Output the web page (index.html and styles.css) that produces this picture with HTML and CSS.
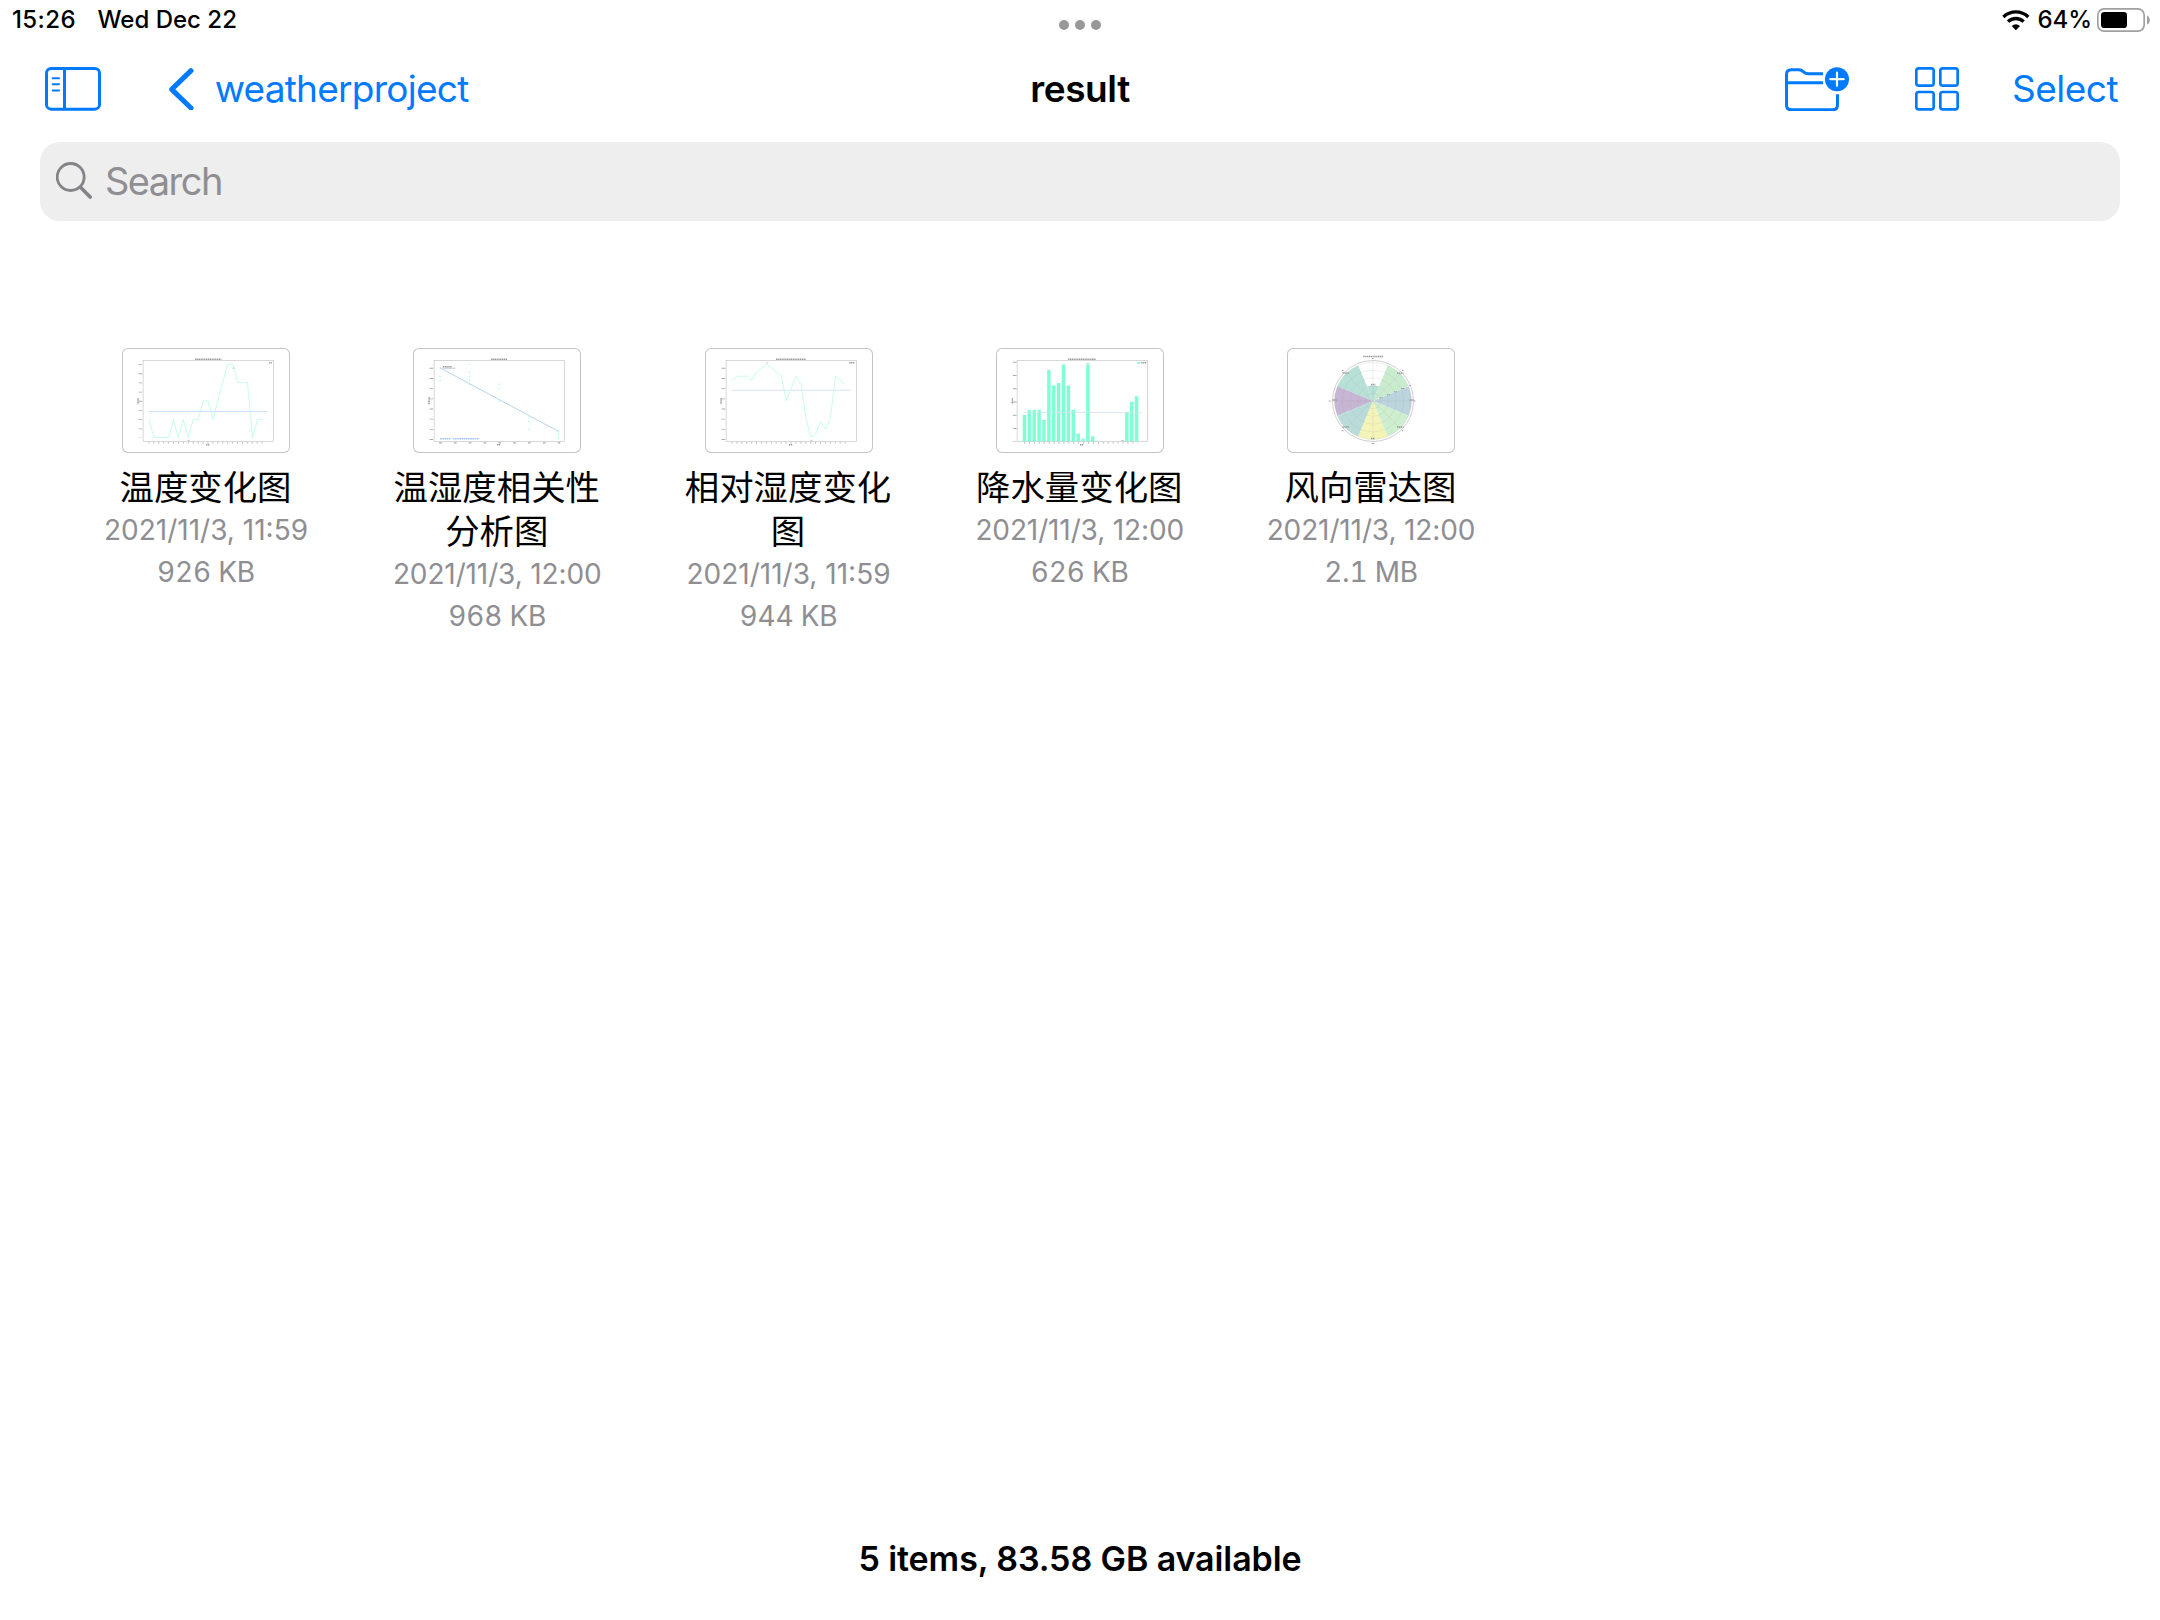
FILE: index.html
```html
<!DOCTYPE html>
<html lang="en">
<head>
<meta charset="utf-8">
<title>result</title>
<link rel="stylesheet" href="styles.css">
</head>
<body>
<div class="screen">
  <header class="status">
    <div class="status-left"><span class="time">15:26</span><span class="date">Wed Dec 22</span></div>
    <div class="dots"><i></i><i></i><i></i></div>
    <div class="status-right">
      <svg class="wifi" viewBox="786 29 83 61"><path d="M790 50A54 54 0 0 1 865 50M804 64A34 34 0 0 1 851 64" fill="none" stroke="#000" stroke-width="10"/><path d="M815 77Q827.500 67 840 77L827.500 90Z"/></svg>
      <span class="percent">64%</span>
      <svg class="battery" viewBox="1071 24 159 72"><rect x="1073.500" y="26.500" width="139" height="67" rx="19" fill="none" stroke="#a0a0a0" stroke-width="5"/><rect x="1083" y="36" width="78" height="48" rx="10"/><path d="M1221 46Q1230 51 1230 60T1221 74Z" fill="#a0a0a0"/></svg>
    </div>
  </header>
  <nav class="nav">
    <div class="nav-left">
      <svg class="icon-sidebar" viewBox="135 202 168 131"><g fill="none" stroke="#007aff"><rect x="139.500" y="206.500" width="159" height="122" rx="14" stroke-width="9"/><path d="M193.500 206V329" stroke-width="9"/><path d="M158 235.500H177M158 254H177M158 272.500H177" stroke-width="6" stroke-linecap="round"/></g></svg>
      <a class="back"><svg class="icon-back" viewBox="507 203 74 128"><path d="M573 211L515 267L573 323" fill="none" stroke="#007aff" stroke-width="15" stroke-linecap="round" stroke-linejoin="round"/></svg><span class="back-label">weatherproject</span></a>
    </div>
    <h1 class="title">result</h1>
    <div class="nav-right">
      <svg class="icon-folder" viewBox="135 197 192 133"><g fill="none" stroke="#007aff" stroke-width="9"><path d="M249 217.500H205C190 217.500 191 205.500 177 205.500H154Q139.500 205.500 139.500 220V311Q139.500 325.500 154 325.500H278Q292.500 325.500 292.500 311V279M140 244.500H249"/></g><circle cx="291" cy="233.500" r="36" fill="#007aff"/><path d="M271 233.500H311M291 213.500V253.500" stroke="#fff" stroke-width="6.500" stroke-linecap="round"/></svg>
      <svg class="icon-grid" viewBox="525 202 132 131"><g fill="none" stroke="#007aff" stroke-width="8"><rect x="529" y="206" width="52" height="52" rx="7"/><rect x="601" y="206" width="52" height="52" rx="7"/><rect x="529" y="277" width="52" height="52" rx="7"/><rect x="601" y="277" width="52" height="52" rx="7"/></g></svg>
      <a class="select">Select</a>
    </div>
  </nav>
  <div class="search">
    <svg class="icon-search" viewBox="168 486 108 111"><g fill="none" stroke="#848488"><circle cx="212" cy="531" r="40.500" stroke-width="8.500"/><path d="M243 563L270.500 591" stroke-width="11" stroke-linecap="round"/></g></svg>
    <span class="placeholder">Search</span>
  </div>
  <main class="files">
    <article class="file">
      <svg class="thumb" viewBox="97 40 502 313">
        <rect class="axes" x="160" y="77" width="390" height="242"/>
        <path class="label" d="M315 73H394M537 84H545M348 329H359M145 190V208"/>
        <path class="tick-y" d="M152 88V308"/><path class="tick-x" d="M176 323H519"/>
        <path class="mean" d="M178 229.500H531"/>
        <path class="series" d="M178 253L192 307L207 307L221 307L236 307L251 253L265 307L280 253L295 307L310 253L325 253L340 198L354 198L369 253L383 198L398 143L413 88L428 88L443 143L457 143L472 143L487 307L502 253L517 253"/>
        <path class="purple" d="M293 316H299M427 100H433"/>
      </svg>
      <h2 class="name">温度变化图</h2><p class="meta">2021/11/3, 11:59</p><p class="meta size">926 KB</p>
    </article>
    <article class="file">
      <svg class="thumb" viewBox="100 40 502 313">
        <rect class="axes" x="163" y="77" width="390" height="242"/>
        <path class="label" d="M333 73H382M189 96H215M351 329H362M148 187V208"/>
        <path class="purple" d="M189 100H227"/>
        <path class="tick-y wide" d="M155 99V316"/><path class="tick-x wide" d="M178 323H540"/>
        <path class="note" d="M181 311H212M219 311H298"/>
        <path class="fit" d="M181 99L535 289"/>
        <path class="points" d="M181 99h.1M181 124h.1M181 136h.1M269 88h.1M269 112h.1M269 124h.1M269 136h.1M269 148h.1M358 148h.1M358 161h.1M358 198h.1M446 246h.1M446 259h.1M446 283h.1M535 289h.1M535 296h.1M535 307h.1"/>
      </svg>
      <h2 class="name">温湿度相关性分析图</h2><p class="meta noon">2021/11/3, 12:00</p><p class="meta size">968 KB</p>
    </article>
    <article class="file">
      <svg class="thumb" viewBox="106 40 502 313">
        <rect class="axes" x="169" y="77" width="390" height="242"/>
        <path class="label" d="M318 73H408M537 84H554M357 329H368M154 190V208"/>
        <path class="tick-y wide" d="M161 99V316"/><path class="tick-x" d="M185 323H528"/>
        <path class="mean soft" d="M187 166H541"/>
        <path class="series" d="M187 136L201 124L216 124L231 124L245 136L260 112L275 100L291 88L305 100L319 112L334 124L349 198L363 161L378 124L393 148L407 246L422 307L437 296L451 259L466 283L481 246L496 124L511 136L526 149"/>
        <path class="purple" d="M289 84H295M421 316H427"/>
      </svg>
      <h2 class="name">相对湿度变化图</h2><p class="meta">2021/11/3, 11:59</p><p class="meta size">944 KB</p>
    </article>
    <article class="file">
      <svg class="thumb" viewBox="109 40 502 313">
        <rect class="axes" x="172" y="77" width="390" height="242"/>
        <path class="label" d="M324 73H408M543 84H558M360 329H371M158 190V208"/>
        <path class="tick-y bars-y" d="M165 81V320"/><path class="tick-x" d="M193 323H532"/>
        <path class="bars" d="M194 319V240M208.600 319V224M223.200 319V224M237.800 319V224M252.400 319V255M267 319V105M281.600 319V152M296 319V144M310.700 319V89M325.300 319V152M340 319V224M354.500 319V295M369 319V311M383.600 319V89M398.200 319V303M500 319V232M514.500 319V200M529 319V184"/>
        <path d="M531 84H540" stroke="#7fffd4" stroke-width="5"/>
        <path class="mean soft" d="M194 232H543"/><path class="purple" d="M380 86H387M483 316H491"/>
      </svg>
      <h2 class="name">降水量变化图</h2><p class="meta noon">2021/11/3, 12:00</p><p class="meta size">626 KB</p>
    </article>
    <article class="file">
      <svg class="thumb" viewBox="112 40 502 313">
        <g transform="translate(369 198)">
          <path fill="#bcd4dd" d="M0 0L106.200-44A115 115 0 0 1 106.200 44Z"/>
          <path fill="#c9eccf" d="M0 0L44-106.200A115 115 0 0 1 106.200-44Z"/>
          <path fill="#b7e1d6" d="M0 0L-17.600-42.500A46 46 0 0 1 17.600-42.500Z"/>
          <path fill="#b7e1d6" d="M0 0L-106.200-44A115 115 0 0 1-44-106.200Z"/>
          <path fill="#c7b5d4" d="M0 0L-106.200 44A115 115 0 0 1-106.200-44Z"/>
          <path fill="#b9dcda" d="M0 0L-44 106.200A115 115 0 0 1-106.200 44Z"/>
          <path fill="#f4f4b9" d="M0 0L44 106.200A115 115 0 0 1-44 106.200Z"/>
          <path fill="#cdeecf" d="M0 0L106.200 44A115 115 0 0 1 44 106.200Z"/>
          <g class="polar"><circle r="23"/><circle r="46"/><circle r="69"/><circle r="92"/><circle r="115"/><path d="M-121 0H121M0-121V121M-85.600-85.600L85.600 85.600M-85.600 85.600L85.600-85.600"/></g>
          <circle r="121" fill="none" stroke="#c4c4c4" stroke-width="2.500"/>
          <path class="label" d="M-29-133H30M-6-49H7M72-84H91M-91-84H-72M-121-3H-108M109-3H122M-91 78H-72M72 78H91M-6 112H6"/>
          <path class="label small" d="M-3-127H3M87-91H92M-93-91H-87M-132 0H-125M122 0H128M-94 89H-87M86 89H92M-4 127H4M20-10H29M42-19H51M63-28H72M84-37H93M108-46H114"/>
        </g>
      </svg>
      <h2 class="name">风向雷达图</h2><p class="meta noon">2021/11/3, 12:00</p><p class="meta size">2.1 MB</p>
    </article>
  </main>
  <footer class="summary"><span>5 items, 83.58 GB available</span></footer>
</div>
</body>
</html>
```
FILE: styles.css
```css
* { box-sizing: border-box; margin: 0; padding: 0; }
body { background: #fff; font-family: Inter, "Noto Sans CJK SC", sans-serif; }
svg { display: block; flex: none; }
.screen { width: 2160px; height: 1620px; display: flex; flex-direction: column; overflow: hidden; }

.status { height: 40px; display: grid; grid-template-columns: 1fr auto 1fr; align-items: center; padding: 0 10px; font-size: 24px; font-weight: 500; line-height: 40px; }
.status-left { display: flex; gap: 21.500px; padding-left: 2px; }
.time { letter-spacing: .4px; }
.dots { display: flex; gap: 6px; padding-top: 10px; }
.dots i { width: 10px; height: 10px; border-radius: 50%; background: #999; }
.status-right { display: flex; justify-content: flex-end; align-items: center; }
.wifi { width: 27.700px; height: 20.300px; margin-right: 8px; }
.percent { letter-spacing: -.1px; }
.battery { width: 53px; height: 24px; margin-left: 5px; }

.nav { height: 98px; display: grid; grid-template-columns: 1fr auto 1fr; align-items: center; padding: 0 42px; font-size: 37px; line-height: 48px; color: #007aff; }
.nav-left, .nav-right, .back { display: flex; align-items: center; }
.nav-left { gap: 68px; padding-left: 3px; }
.back { gap: 21px; }
.back-label { letter-spacing: -.750px; }
.nav-right { justify-content: flex-end; }
.icon-sidebar { width: 56px; height: 43.700px; }
.icon-back { width: 24.700px; height: 42.700px; }
.icon-folder { width: 64px; height: 44.300px; margin-right: 66px; }
.icon-grid { width: 44px; height: 43.700px; margin-right: 53px; }
.select { letter-spacing: -.5px; }
.title { font-size: 37px; font-weight: 600; letter-spacing: -.4px; color: #000; }

.search { height: 79px; margin: 4px 40px 0; padding: 0 0 2px 16px; border-radius: 20px; background: #eee; display: flex; align-items: center; gap: 13px; font-size: 38px; letter-spacing: -1.550px; color: #8e8e93; }
.icon-search { width: 36px; height: 37px; }

.files { display: grid; grid-template-columns: repeat(5, 291.250px); padding: 127px 0 0 60.400px; flex: 1; align-items: start; }
.file { display: flex; flex-direction: column; align-items: center; text-align: center; }
.thumb { width: 168px; height: 105px; box-shadow: inset 0 0 0 1px #c4c4c6; border-radius: 6px; }
.name { width: 220px; margin: 10px 1px 2px 0; font-family: "Noto Sans CJK SC", sans-serif; font-size: 34.400px; font-weight: 400; line-height: 44px; color: #000; }
.meta { font-size: 28px; line-height: 42px; color: #8e8e93; }
.noon { letter-spacing: -.120px; }
.size { font-variant-numeric: tabular-nums; letter-spacing: -.2px; }

.axes { fill: none; stroke: #b0b0b0; stroke-width: 1.500; }
.label { fill: none; stroke: #999; stroke-width: 4.500; stroke-dasharray: 4 1.500; }
.small { stroke: #999; stroke-width: 3; }
.tick-y { stroke: #aaa; stroke-width: 11; stroke-dasharray: 2.500 24.900; }
.wide { stroke-dasharray: 2.500 27.900; }
.bars-y { stroke-dasharray: 2.500 37.100; }
.tick-x { stroke: #aaa; stroke-width: 4; stroke-dasharray: 3 11.700; }
.tick-x.wide { stroke-dasharray: 8 36.300; }
.mean { stroke: #bfdcff; stroke-width: 2.500; }
.soft { stroke: #cfe0ee; }
.fit { stroke: #abcbe6; stroke-width: 2.500; }
.note { stroke: #a6c5fa; stroke-width: 4.500; stroke-dasharray: 5 1.500; }
.series { fill: none; stroke: #bcfbe7; stroke-width: 2.500; }
.points { stroke: #8ffbdc; stroke-width: 4; stroke-linecap: round; }
.purple { stroke: #aaaad0; stroke-width: 2; }
.bars { stroke: #7fffd4; stroke-width: 10.500; }
.polar { fill: none; stroke: #999; stroke-opacity: .3; stroke-width: 1.500; }

.summary { height: 90px; display: flex; justify-content: center; font-size: 34px; font-weight: 600; line-height: 58px; letter-spacing: -.1px; color: #000; }
```
